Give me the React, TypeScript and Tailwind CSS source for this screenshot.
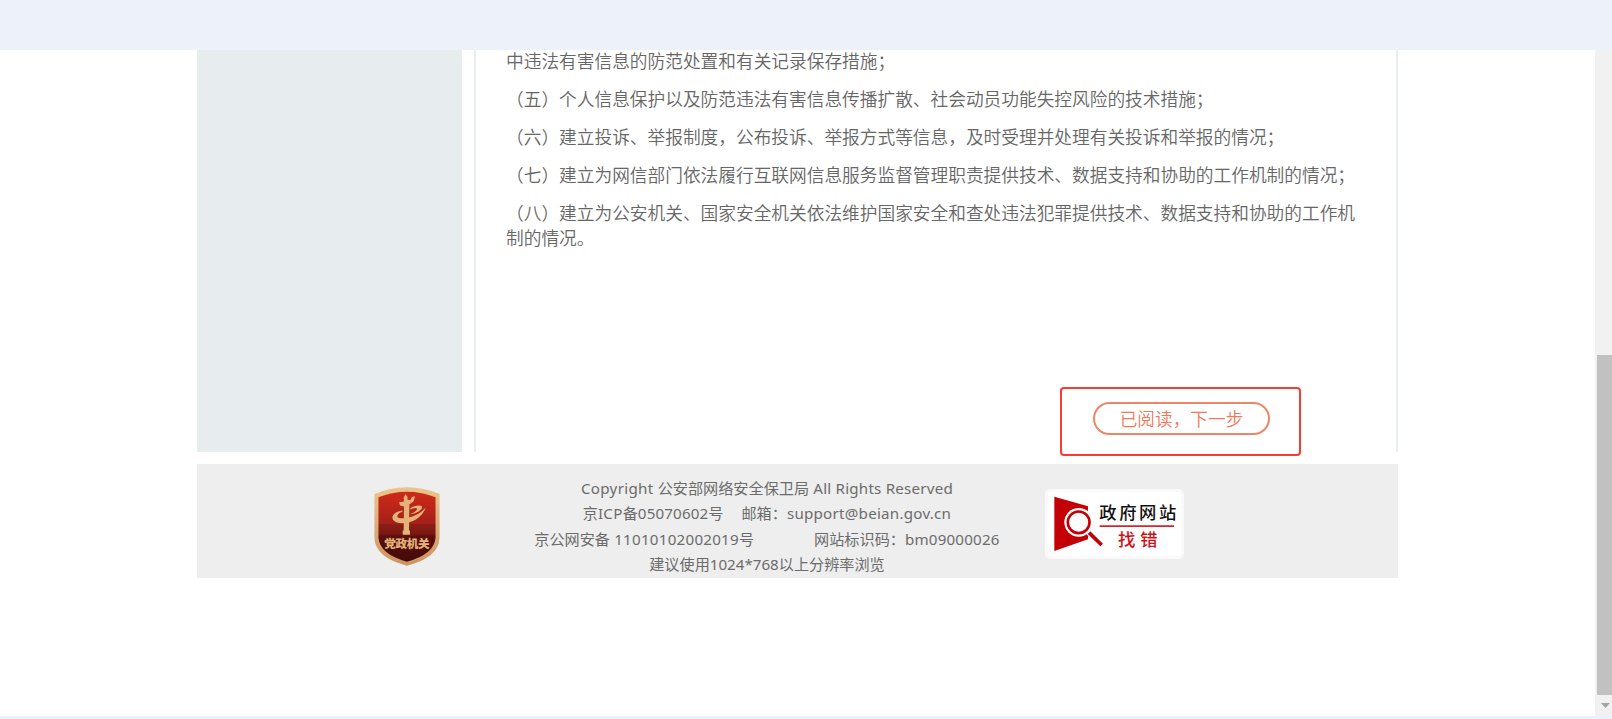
const CLAUSES = [
  '中违法有害信息的防范处置和有关记录保存措施；',
  '（五）个人信息保护以及防范违法有害信息传播扩散、社会动员功能失控风险的技术措施；',
  '（六）建立投诉、举报制度，公布投诉、举报方式等信息，及时受理并处理有关投诉和举报的情况；',
  '（七）建立为网信部门依法履行互联网信息服务监督管理职责提供技术、数据支持和协助的工作机制的情况；',
  '（八）建立为公安机关、国家安全机关依法维护国家安全和查处违法犯罪提供技术、数据支持和协助的工作机制的情况。',
];

function AgencyShield() {
  return (
    <svg viewBox="41 37 198 238" className="h-[79px] w-[66px]">
      <defs>
        <linearGradient id="shield" x1="0" y1="0" x2="0" y2="1">
          <stop offset="0" stopColor="#cf2a18" />
          <stop offset="0.45" stopColor="#a5201a" />
          <stop offset="0.47" stopColor="#8c1d16" />
          <stop offset="0.6" stopColor="#7a1812" />
          <stop offset="0.64" stopColor="#5c0f0c" />
          <stop offset="1" stopColor="#420a0a" />
        </linearGradient>
        <linearGradient id="rim" x1="0" y1="0" x2="0" y2="1">
          <stop offset="0" stopColor="#ebc48c" />
          <stop offset="1" stopColor="#cd9460" />
        </linearGradient>
      </defs>
      <path
        d="M42 58Q90 38 140 38Q190 38 238 58V190Q236 250 140 274Q44 250 42 190Z"
        fill="url(#rim)"
      />
      <path
        d="M54 68Q95 51 140 51Q185 51 226 68V190Q222 240 140 262Q58 240 54 190Z"
        fill="url(#shield)"
      />
      <g fill="#e2b47a">
        <path d="M136 58L142 68L141 75L150 77L155 67L164 65L160 80L147 90L146 168H149V181H127V168H130L131 96L119 93L116 83L131 81L130 69Z" />
        <path d="M126 108C104 111 93 123 97 134C106 151 143 149 168 134C181 126 190 114 197 99C178 119 154 130 131 131C114 132 108 128 112 121C115 116 120 113 126 112Z" />
        <path d="M150 101C162 92 180 90 185 96C188 106 168 117 150 119C162 114 173 106 170 102C166 98 157 101 150 105Z" />
        <text
          x="140"
          y="222"
          textAnchor="middle"
          textLength="137"
          fontSize="35"
          fontWeight="900"
          fontFamily="'Noto Sans CJK SC', sans-serif"
        >
          党政机关
        </text>
      </g>
    </svg>
  );
}

function ErrorReportBadge() {
  return (
    <svg viewBox="30 27 417 210" className="h-[70px] w-[139px]">
      <rect x="30" y="27" width="417" height="210" rx="15" fill="#f9f9f9" />
      <rect x="38" y="35" width="401" height="194" rx="10" fill="#fff" />
      <path d="M58 50L159 79V178L58 213Z" fill="#c30006" />
      <path d="M156 152L203 197" stroke="#fff" strokeWidth="18" />
      <circle cx="131" cy="127" r="43" fill="#fff" />
      <circle cx="131" cy="127" r="32.5" fill="#fff" stroke="#c30006" strokeWidth="8" />
      <path d="M162 158L200 195" stroke="#c30006" strokeWidth="11" />
      <path d="M194 138.5H417" stroke="#d8232a" strokeWidth="5" />
      <g fontFamily="'Noto Sans CJK SC', sans-serif" fontWeight="500">
        <text x="193" y="118" fontSize="52" textLength="231" fill="#111">
          政府网站
        </text>
        <text x="249" y="198" fontSize="52" textLength="119" fill="#cc1219">
          找错
        </text>
      </g>
    </svg>
  );
}

function Footer() {
  return (
    <footer className="mt-3 flex h-[114px] bg-[#eeeeee] pl-[177px]">
      <div className="pt-[23px]">
        <AgencyShield />
      </div>
      <div className="ml-[87px] w-[480px] pt-3 text-center text-[15.15px] leading-[25.3px] whitespace-pre text-[#6c6c6c]">
        <p>
          <span className="tracking-[0.3px]">Copyright </span>公安部网络安全保卫局
          <span className="tracking-[0.22px]"> All Rights Reserved</span>
        </p>
        <p>
          京<span className="tracking-[0.3px]">ICP</span>备
          <span className="tracking-[0.15px]">05070602</span>号
          <span className="ml-[18px]">
            邮箱：<span className="tracking-[0.25px]">support@beian.gov.cn</span>
          </span>
        </p>
        <p>
          京公网安备<span className="tracking-[0.25px]"> 11010102002019</span>号
          <span className="ml-[60px]">
            网站标识码：<span className="tracking-[0.2px]">bm09000026</span>
          </span>
        </p>
        <p>建议使用1024*768以上分辨率浏览</p>
      </div>
      <div className="ml-[38px] pt-[25px]">
        <ErrorReportBadge />
      </div>
    </footer>
  );
}

function Scrollbar() {
  return (
    <div className="flex w-[17px] flex-col bg-[#f1f1f1] pl-[2px]">
      <div className="mt-[305px] h-[340px] bg-[#c1c1c1]" />
      <svg viewBox="0 0 15 20" className="h-5 w-[15px]">
        <path d="M4 8H13L8.5 13Z" fill="#a3a3a3" />
      </svg>
    </div>
  );
}

export default function App() {
  return (
    <div className="flex h-[719px] w-[1612px] flex-col overflow-hidden bg-[#edf2fa] pt-[50px] pb-[3px] font-['Noto_Sans','Noto_Sans_CJK_SC',sans-serif]">
      <div className="flex flex-1 bg-white">
        <div className="flex-1 pl-[197px]">
          <div className="w-[1201px]">
            <div className="flex h-[402px] gap-3">
              <aside className="w-[265px] bg-[#e7edef]" />
              <main className="relative w-[924px] border-x-2 border-[#e9eef2] pl-[30px]">
                <div className="-mt-0.5 w-[856px] space-y-[13.2px] font-['Noto_Sans_CJK_SC',sans-serif] text-[17.69px] leading-[24.8px] font-[350] text-[#666]">
                  {CLAUSES.map((clause) => (
                    <p key={clause}>{clause}</p>
                  ))}
                </div>
                <div className="absolute top-[337px] left-[584px] flex h-[69px] w-[241px] rounded-[4px] border-2 border-[#fb3a30] pt-[13px] pl-[31px]">
                  <button className="h-[33px] w-[177px] rounded-full border-2 border-[#ee8468] pt-px font-['Noto_Sans_CJK_SC',sans-serif] text-[17.67px] leading-none font-[350] text-[#ee7a5c]">
                    已阅读，下一步
                  </button>
                </div>
              </main>
            </div>
            <Footer />
          </div>
        </div>
        <Scrollbar />
      </div>
    </div>
  );
}
